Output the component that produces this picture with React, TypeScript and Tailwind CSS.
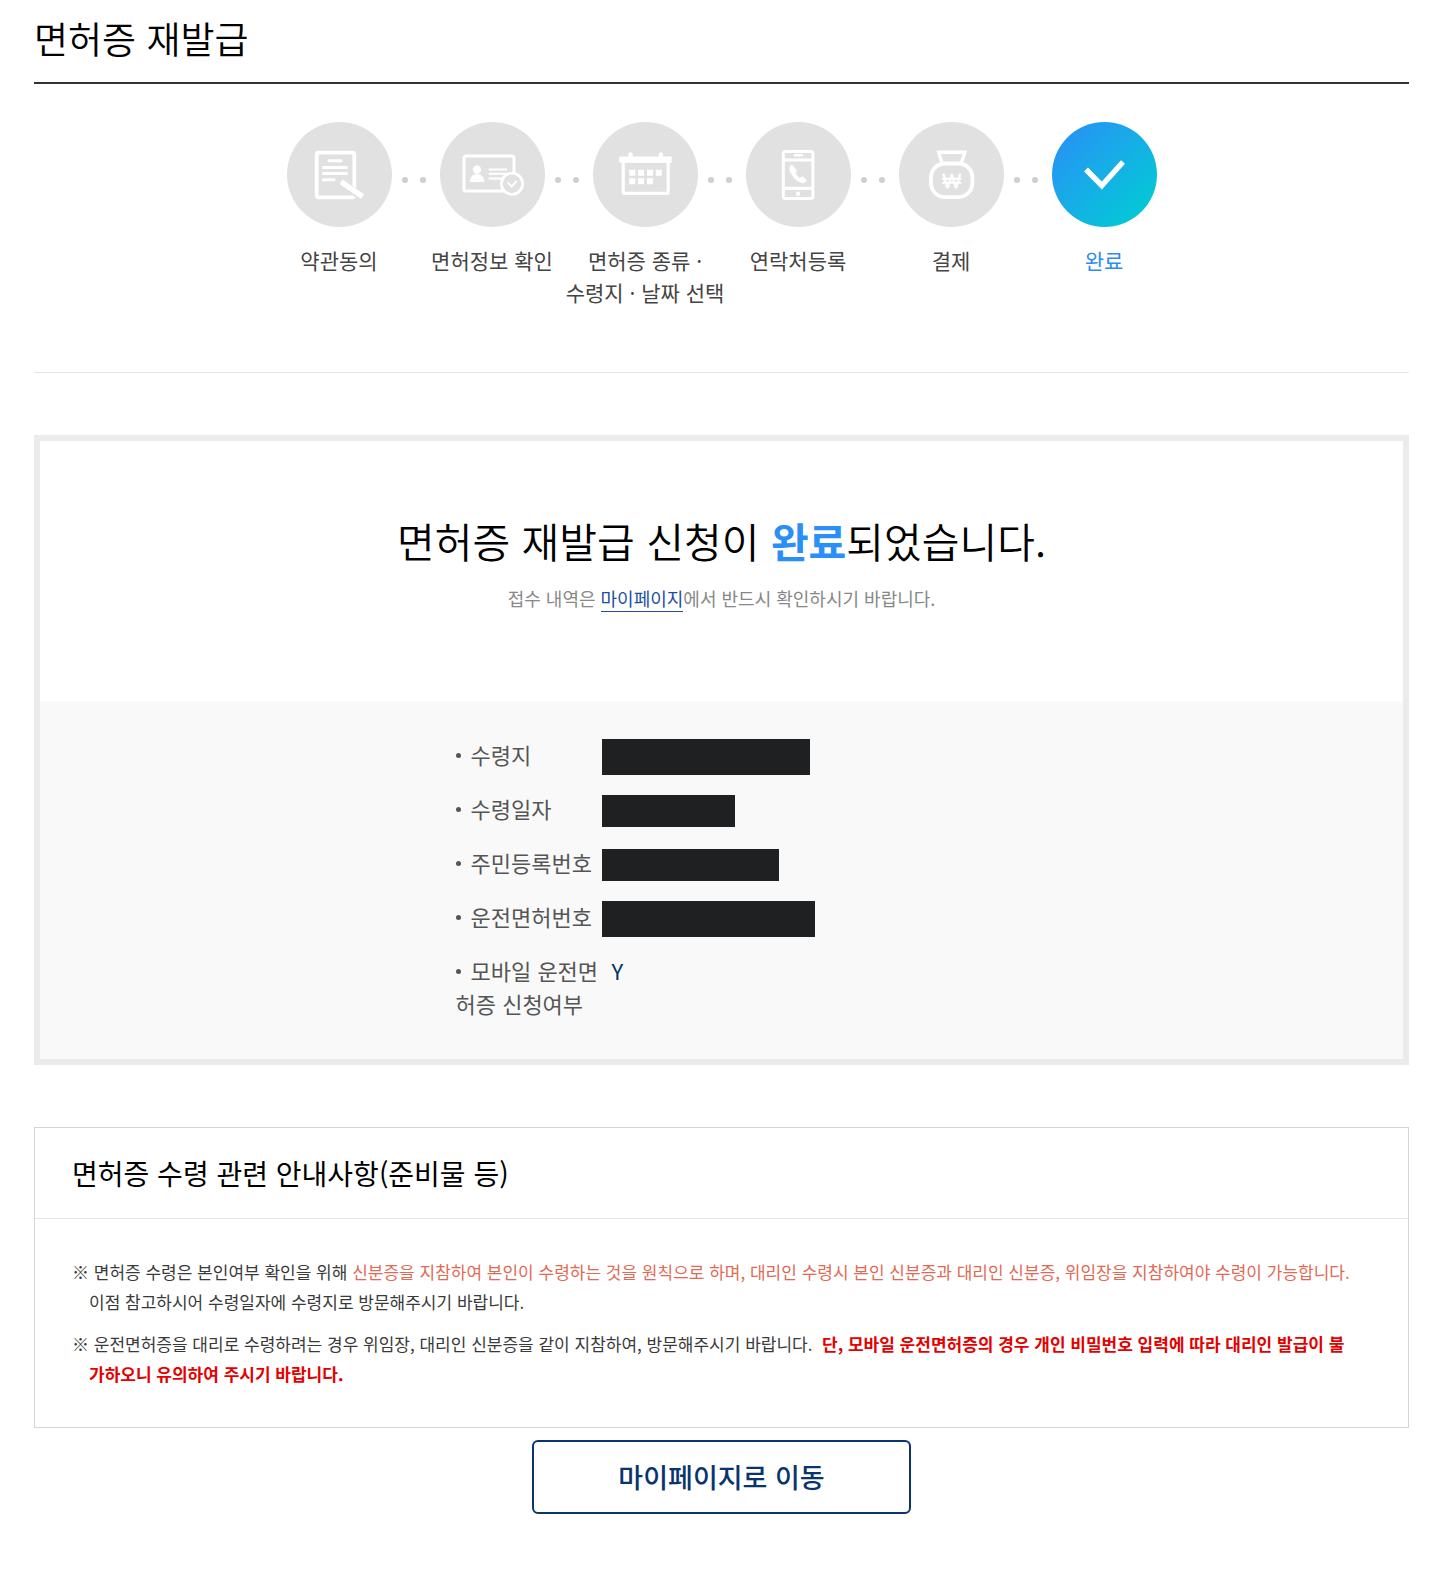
import { ReactNode } from 'react';

type Step = {
    label: string[];
    icon: ReactNode;
    active?: boolean;
};

type Field = {
    label: string;
    value?: string;
    maskClass?: string;
};

const TermsIcon = () => (
    <svg viewBox="0 0 105 105" className="size-full" fill="none" stroke="#fff" strokeWidth="3.4" aria-hidden="true">
        <rect x="29.7" y="30.7" width="37.6" height="44.6" rx="2" strokeWidth="3.8" />
        <path d="M42 38.8h12M36.5 45.4h23M36.5 51.4h23M36.5 57.8h10.5" strokeLinecap="round" strokeWidth="3" />
        <path d="M53.5 60.5 76 75.5" stroke="#e1e1e1" strokeWidth="8" />
        <path d="M54 59.8 75.5 74.5" strokeWidth="5.4" />
    </svg>
);

const LicenseIcon = () => (
    <svg viewBox="0 0 105 105" className="size-full" fill="none" stroke="#fff" aria-hidden="true">
        <rect x="24" y="34" width="50" height="35" rx="2" strokeWidth="3" />
        <circle cx="37" cy="47.6" r="4.2" fill="#fff" stroke="none" />
        <path d="M29.8 60c0-5 3-8 7.2-8s7.4 3 7.4 8z" fill="#fff" stroke="none" />
        <path d="M48.7 47.5H67M48.7 51.8H67M48.7 56.6h13" strokeWidth="2" />
        <circle cx="72" cy="61.7" r="10.6" fill="#e1e1e1" strokeWidth="2.8" />
        <path d="m67.6 60.4 4 4.2 5-5.6" strokeWidth="2" />
    </svg>
);

const CalendarIcon = () => (
    <svg viewBox="0 0 105 105" className="size-full" fill="#fff" aria-hidden="true">
        <path d="M26.3 34.5h9v-2a2 2 0 0 1 4.4 0v2h26v-2a2 2 0 0 1 4.4 0v2h8.6v6.2H26.3z" />
        <rect x="30.2" y="39" width="45" height="32.4" rx="2" fill="none" stroke="#fff" strokeWidth="3.2" />
        <path d="M36.3 47.7h6v6h-6zM45 47.7h6v6h-6zM54 47.7h6v6h-6zM62.8 47.7h6v6h-6zM36.3 56.2h6v6h-6zM45 56.2h6v6h-6zM54 56.2h6v6h-6z" />
    </svg>
);

const PhoneIcon = () => (
    <svg viewBox="0 0 105 105" className="size-full" fill="none" stroke="#fff" aria-hidden="true">
        <rect x="37.3" y="29.5" width="29.6" height="47" rx="2" strokeWidth="3" />
        <path d="M37 38h30M37 66.4h30" strokeWidth="3.2" />
        <path d="M49 33.3h7" strokeWidth="2.4" strokeLinecap="round" />
        <circle cx="52" cy="71.8" r="2.2" fill="#fff" stroke="none" />
        <path
            d="M46.2 42.8c-3 1.4-3.4 4.3-1.8 7.7 2.5 5.2 6.2 8.8 10.6 10.2 2.5.7 4.8.2 6-2.1l-4.6-4.4-2.6 1.7c-2.1-1.3-3.5-3-4.3-5.3l1.5-2.2z"
            fill="#fff"
            stroke="none"
        />
    </svg>
);

const MoneyBagIcon = () => (
    <svg viewBox="0 0 105 105" className="size-full" fill="none" stroke="#fff" aria-hidden="true">
        <path d="M42.8 40.6 39.6 30.2h26.2L62.6 40.6" strokeWidth="3.4" />
        <rect x="32" y="41.5" width="41.4" height="33.6" rx="14" strokeWidth="3.8" />
        <text
            x="52.6"
            y="65.6"
            textAnchor="middle"
            fill="#fff"
            strokeWidth="0.4"
            fontSize="20"
            fontFamily="'Liberation Sans', sans-serif"
        >
            ₩
        </text>
    </svg>
);

const CheckIcon = () => (
    <svg viewBox="0 0 105 105" className="size-full" fill="none" stroke="#fff" aria-hidden="true">
        <path d="m34 47.5 15.8 16L71 40" strokeWidth="5.4" />
    </svg>
);

const steps: Step[] = [
    { label: ['약관동의'], icon: <TermsIcon /> },
    { label: ['면허정보 확인'], icon: <LicenseIcon /> },
    { label: ['면허증 종류 ·', '수령지 · 날짜 선택'], icon: <CalendarIcon /> },
    { label: ['연락처등록'], icon: <PhoneIcon /> },
    { label: ['결제'], icon: <MoneyBagIcon /> },
    { label: ['완료'], icon: <CheckIcon />, active: true },
];

const fields: Field[] = [
    { label: '수령지', maskClass: 'w-[208px] h-9' },
    { label: '수령일자', maskClass: 'w-[133px] h-8' },
    { label: '주민등록번호', maskClass: 'w-[177px] h-8' },
    { label: '운전면허번호', maskClass: 'w-[213px] h-9' },
    { label: '모바일 운전면허증 신청여부', value: 'Y' },
];

const StepItem = ({ step, last }: { step: Step; last: boolean }) => (
    <>
        <li className="flex w-[105px] flex-col items-center" aria-current={step.active ? 'step' : undefined}>
            <div
                className={
                    step.active
                        ? 'size-[105px] rounded-full bg-linear-to-br from-[#2a8bf8] to-[#00d0cf]'
                        : 'size-[105px] rounded-full bg-[#e1e1e1]'
                }
            >
                {step.icon}
            </div>
            <div
                className={
                    step.active
                        ? 'mt-[17px] text-center text-[21px] leading-8 whitespace-nowrap text-[#2f8af5]'
                        : 'mt-[17px] text-center text-[21px] leading-8 whitespace-nowrap text-[#444]'
                }
            >
                {step.label.map((line) => (
                    <div key={line}>{line}</div>
                ))}
            </div>
        </li>
        {!last && (
            <li className="mt-[55px] flex w-12 justify-center gap-3 pr-1" aria-hidden="true">
                <span className="size-1.5 rounded-full bg-[#cfcfcf]" />
                <span className="size-1.5 rounded-full bg-[#cfcfcf]" />
            </li>
        )}
    </>
);

const FieldRow = ({ field }: { field: Field }) => (
    <div className="grid grid-cols-[146px_1fr]">
        <dt className="text-[#555]">
            <span className="mr-[10px] mb-1.5 inline-block size-[5px] rounded-full bg-[#555] align-middle" />
            {field.label}
        </dt>
        {field.maskClass ? (
            <dd className="flex h-[37px] items-center">
                <span className={`${field.maskClass} shrink-0 bg-[#1f2022]`} />
            </dd>
        ) : (
            <dd className="pl-[10px] text-[#003366]">{field.value}</dd>
        )}
    </div>
);

const App = () => {
    return (
        <main lang="ko" className="pr-7 pb-14 pl-[34px] font-['Noto_Sans_CJK_KR',sans-serif] text-black">
            <h1 className="border-b-2 border-[#333] pt-[11px] pb-[17px] text-[37px] leading-[54px] font-[350]">
                면허증 재발급
            </h1>

            <ol className="flex h-[289px] justify-center border-b border-[#e5e5e5] pt-[38px]">
                {steps.map((step, i) => (
                    <StepItem key={step.label[0]} step={step} last={i === steps.length - 1} />
                ))}
            </ol>

            <section className="mt-[62px] border-6 border-[#ebebeb]">
                <div className="pt-[68px] pb-[88px] text-center">
                    <h2 className="text-[41px] leading-[62px] font-[350]">
                        면허증 재발급 신청이 <strong className="font-bold text-[#2a8ff7]">완료</strong>되었습니다.
                    </h2>
                    <p className="mt-3 text-[18px] leading-[30px] text-[#888]">
                        접수 내역은{' '}
                        <a href="#mypage" className="border-b border-[#1b4fa0] text-[#1b4fa0]">
                            마이페이지
                        </a>
                        에서 반드시 확인하시기 바랍니다.
                    </p>
                </div>
                <div className="bg-[#f9f9f9] pt-[37px] pb-[39px]">
                    <dl className="mx-auto flex w-[532px] max-w-full flex-col gap-[17px] text-[22px] leading-[33px]">
                        {fields.map((field) => (
                            <FieldRow key={field.label} field={field} />
                        ))}
                    </dl>
                </div>
            </section>

            <section className="mt-[62px] border border-[#d5d5d5]">
                <h3 className="border-b border-[#e5e5e5] px-[37px] pt-6 pb-[23px] text-[28px] leading-[43px]">
                    면허증 수령 관련 안내사항(준비물 등)
                </h3>
                <ul className="flex flex-col gap-3 pt-[38px] pr-[50px] pb-[38px] pl-[37px] text-[17px] leading-[30px] text-[#3a3a3a]">
                    <li className="pl-[17px] -indent-[17px]">
                        ※ 면허증 수령은 본인여부 확인을 위해{' '}
                        <span className="text-[#e26a55]">
                            신분증을 지참하여 본인이 수령하는 것을 원칙으로 하며, 대리인 수령시 본인 신분증과 대리인 신분증, 위임장을 지참하여야 수령이 가능합니다.
                        </span>
                        <br />
                        이점 참고하시어 수령일자에 수령지로 방문해주시기 바랍니다.
                    </li>
                    <li className="pl-[17px] -indent-[17px]">
                        ※ 운전면허증을 대리로 수령하려는 경우 위임장, 대리인 신분증을 같이 지참하여, 방문해주시기 바랍니다.&nbsp;{' '}
                        <strong className="font-bold text-[#e50000]">
                            단, 모바일 운전면허증의 경우 개인 비밀번호 입력에 따라 대리인 발급이 불가하오니 유의하여 주시기 바랍니다.
                        </strong>
                    </li>
                </ul>
            </section>

            <div className="mt-3 flex justify-center">
                <button
                    type="button"
                    className="h-[74px] w-[379px] rounded-md border-2 border-[#0a3470] bg-white text-[27px] leading-10 font-medium text-[#0a3470]"
                >
                    마이페이지로 이동
                </button>
            </div>
        </main>
    );
};

export default App;
